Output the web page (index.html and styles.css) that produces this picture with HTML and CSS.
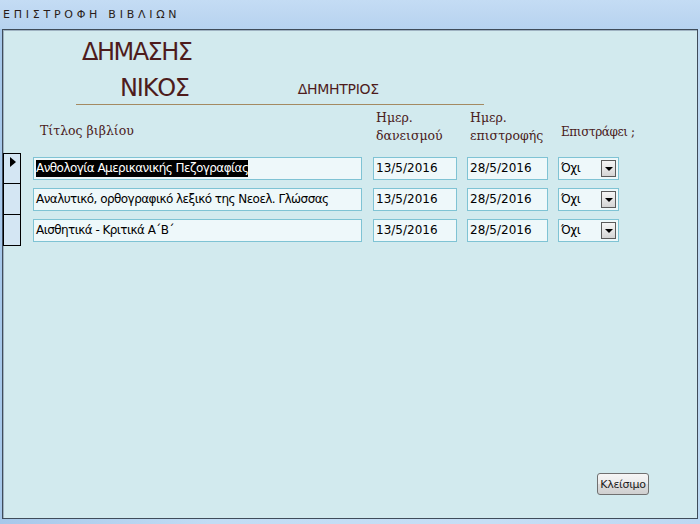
FILE: index.html
```html
<!DOCTYPE html>
<html lang="el">
<head>
<meta charset="utf-8">
<link rel="stylesheet" href="styles.css">
</head>
<body>
<div class="window">
  <div class="titlebar">ΕΠΙΣΤΡΟΦΗ ΒΙΒΛΙΩΝ</div>
  <div class="panel">
    <div class="name-block">
      <div class="surname">ΔΗΜΑΣΗΣ</div>
      <div class="name-row">
        <span class="firstname">ΝΙΚΟΣ</span>
        <span class="father">ΔΗΜΗΤΡΙΟΣ</span>
      </div>
    </div>
    <div class="headers">
      <div class="h-title">Τίτλος βιβλίου</div>
      <div class="h-date1">Ημερ.<br>δανεισμού</div>
      <div class="h-date2">Ημερ.<br>επιστροφής</div>
      <div class="h-ret">Επιστράφει ;</div>
    </div>
    <div class="rows">
      <div class="row">
        <div class="selector"><span class="arrow"></span></div>
        <div class="field f-title"><span class="sel">Ανθολογία Αμερικανικής Πεζογραφίας</span></div>
        <div class="field f-date1">13/5/2016</div>
        <div class="field f-date2">28/5/2016</div>
        <div class="field f-combo"><span>Όχι</span><span class="dd"><span class="tri"></span></span></div>
      </div>
      <div class="row">
        <div class="selector"></div>
        <div class="field f-title">Αναλυτικό, ορθογραφικό λεξικό της Νεοελ. Γλώσσας</div>
        <div class="field f-date1">13/5/2016</div>
        <div class="field f-date2">28/5/2016</div>
        <div class="field f-combo"><span>Όχι</span><span class="dd"><span class="tri"></span></span></div>
      </div>
      <div class="row">
        <div class="selector"></div>
        <div class="field f-title">Αισθητικά - Κριτικά Α΄Β΄</div>
        <div class="field f-date1">13/5/2016</div>
        <div class="field f-date2">28/5/2016</div>
        <div class="field f-combo"><span>Όχι</span><span class="dd"><span class="tri"></span></span></div>
      </div>
    </div>
    <div class="spacer"></div>
    <div class="footer">
      <button class="btn">Κλείσιμο</button>
    </div>
  </div>
</div>
</body>
</html>
```

FILE: styles.css
```css
html, body {
  margin: 0;
  padding: 0;
}
body {
  width: 700px;
  height: 524px;
  overflow: hidden;
  background: #a9c9e6;
  font-family: "DejaVu Sans", Tahoma, sans-serif;
}
.window {
  display: flex;
  flex-direction: column;
  width: 700px;
  height: 524px;
  background: linear-gradient(90deg, #a7c8ea 0%, #c2dcf4 30%, #c6def5 70%, #bdd8f2 100%);
}
.titlebar {
  height: 29px;
  box-sizing: border-box;
  padding: 8px 0 0 3px;
  font-family: "DejaVu Sans", Tahoma, sans-serif;
  font-size: 11px;
  letter-spacing: 3.75px;
  color: #2a1c18;
  background: linear-gradient(180deg, #c4dcf4 0%, #bcd6f1 60%, #b6d3f0 100%);
}
.panel {
  margin: 0 2px 0 2px;
  height: 490px;
  box-sizing: border-box;
  border: 1px solid #3f4c5a;
  box-shadow: inset 1px 1px 0 #9fb3c2;
  background: #d2eaee;
  display: flex;
  flex-direction: column;
}
.name-block {
  margin: 6px 0 0 73px;
  width: 408px;
  height: 68px;
  border-bottom: 1px solid #a48a62;
  color: #4e1c1c;
}
.surname {
  font-size: 24px;
  line-height: 32px;
  padding-left: 6px;
  letter-spacing: -1.5px;
}
.name-row {
  display: flex;
  align-items: baseline;
  margin-top: 4px;
}
.firstname {
  font-size: 24px;
  line-height: 32px;
  padding-left: 44px;
  letter-spacing: -1.2px;
}
.father {
  font-size: 14px;
  margin-left: 109px;
  letter-spacing: -0.3px;
  position: relative;
  top: -2px;
}
.headers {
  display: flex;
  height: 48px;
  font-family: "DejaVu Serif", "Liberation Serif", serif;
  font-size: 12.5px;
  line-height: 18px;
  color: #4a2020;
}
.h-title {
  margin-left: 37px;
  width: 336px;
  padding-top: 17px;
}
.h-date1 {
  width: 94px;
  padding-top: 4px;
}
.h-date2 {
  width: 91px;
  padding-top: 4px;
}
.h-ret {
  padding-top: 18px;
  font-size: 12px;
  letter-spacing: -0.4px;
}
.rows {
  display: flex;
  flex-direction: column;
}
.row {
  display: flex;
  align-items: center;
  height: 31px;
}
.selector {
  width: 18px;
  height: 31px;
  box-sizing: border-box;
  border: 1px solid #000;
  border-top-width: 0;
  background: #d4e6f3;
  margin-right: 12px;
  position: relative;
}
.row:first-child .selector {
  border-top-width: 1px;
}
.arrow {
  position: absolute;
  left: 6px;
  top: 3px;
  width: 0;
  height: 0;
  border-top: 5px solid transparent;
  border-bottom: 5px solid transparent;
  border-left: 6px solid #000;
}
.field {
  height: 23px;
  box-sizing: border-box;
  border: 1px solid #7fc3d4;
  background: #eef8fa;
  font-size: 12px;
  line-height: 21px;
  padding-left: 2px;
  color: #000;
  white-space: nowrap;
  overflow: hidden;
  display: flex;
  align-items: center;
}
.f-title { width: 329px; margin-right: 11px; letter-spacing: -0.55px; }
.f-date1 { width: 84px; margin-right: 10px; }
.f-date2 { width: 81px; margin-right: 10px; }
.f-combo { width: 61px; justify-content: space-between; padding-right: 2px; letter-spacing: -0.5px; }
.sel {
  background: #000;
  color: #fff;
  line-height: 17px;
}
.dd {
  width: 15px;
  height: 17px;
  box-sizing: border-box;
  border: 1px solid #5a5a5a;
  background: linear-gradient(180deg, #f4f4f4 0%, #e6e6e6 50%, #d4d4d4 100%);
  display: flex;
  align-items: center;
  justify-content: center;
}
.tri {
  width: 0;
  height: 0;
  border-left: 4px solid transparent;
  border-right: 4px solid transparent;
  border-top: 4px solid #000;
  margin-top: 1px;
}
.spacer {
  flex: 1;
}
.footer {
  display: flex;
  justify-content: flex-end;
  padding: 0 48px 23px 0;
}
.btn {
  width: 52px;
  height: 22px;
  padding: 0;
  border: 1px solid #707070;
  border-radius: 3px;
  background: linear-gradient(180deg, #f6f6f6 0%, #ebebeb 50%, #dcdcdc 51%, #d0d0d0 100%);
  font-family: "DejaVu Sans", Tahoma, sans-serif;
  font-size: 11px;
  letter-spacing: -0.3px;
  color: #1a1a1a;
}
```
